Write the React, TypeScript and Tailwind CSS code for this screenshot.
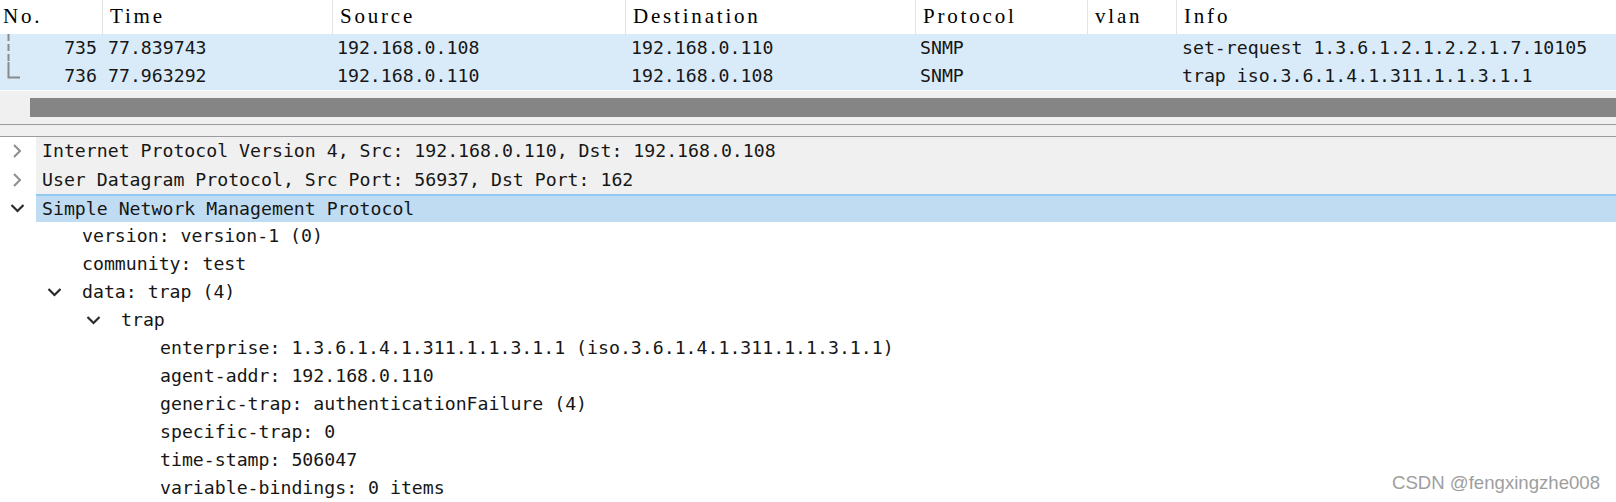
const mono = "font-['DejaVu_Sans_Mono','Liberation_Mono',monospace] text-[18.2px] text-[#161616]"

interface Column {
	title: string
	width: string
}

const columns: Column[] = [
	{ title: 'No.', width: 'w-[102px]' },
	{ title: 'Time', width: 'w-[230px]' },
	{ title: 'Source', width: 'w-[293px]' },
	{ title: 'Destination', width: 'w-[290px]' },
	{ title: 'Protocol', width: 'w-[172px]' },
	{ title: 'vlan', width: 'w-[89px]' },
	{ title: 'Info', width: 'flex-1' }
]

interface Packet {
	no: number
	time: string
	source: string
	destination: string
	protocol: string
	info: string
	last: boolean
}

const packets: Packet[] = [
	{
		no: 735,
		time: '77.839743',
		source: '192.168.0.108',
		destination: '192.168.0.110',
		protocol: 'SNMP',
		info: 'set-request 1.3.6.1.2.1.2.2.1.7.10105',
		last: false
	},
	{
		no: 736,
		time: '77.963292',
		source: '192.168.0.110',
		destination: '192.168.0.108',
		protocol: 'SNMP',
		info: 'trap iso.3.6.1.4.1.311.1.1.3.1.1',
		last: true
	}
]

type Fold = 'open' | 'closed' | 'none'

interface Node {
	text: string
	depth: number
	fold: Fold
	tone?: 'gray' | 'selected'
	height?: string
}

const nodes: Node[] = [
	{
		text: 'Internet Protocol Version 4, Src: 192.168.0.110, Dst: 192.168.0.108',
		depth: 0,
		fold: 'closed',
		tone: 'gray'
	},
	{
		text: 'User Datagram Protocol, Src Port: 56937, Dst Port: 162',
		depth: 0,
		fold: 'closed',
		tone: 'gray',
		height: 'h-[29px]'
	},
	{ text: 'Simple Network Management Protocol', depth: 0, fold: 'open', tone: 'selected' },
	{ text: 'version: version-1 (0)', depth: 1, fold: 'none' },
	{ text: 'community: test', depth: 1, fold: 'none' },
	{ text: 'data: trap (4)', depth: 1, fold: 'open' },
	{ text: 'trap', depth: 2, fold: 'open' },
	{
		text: 'enterprise: 1.3.6.1.4.1.311.1.1.3.1.1 (iso.3.6.1.4.1.311.1.1.3.1.1)',
		depth: 3,
		fold: 'none'
	},
	{ text: 'agent-addr: 192.168.0.110', depth: 3, fold: 'none' },
	{ text: 'generic-trap: authenticationFailure (4)', depth: 3, fold: 'none' },
	{ text: 'specific-trap: 0', depth: 3, fold: 'none' },
	{ text: 'time-stamp: 506047', depth: 3, fold: 'none' },
	{ text: 'variable-bindings: 0 items', depth: 3, fold: 'none' }
]

const indent: Record<number, string> = {
	1: 'pl-0',
	2: 'pl-[39px]',
	3: 'pl-[78px]'
}

const Chevron = ({ fold }: { fold: Fold }) => {
	if (fold === 'closed') {
		return (
			<svg width="10" height="16" viewBox="0 0 10 16" className="shrink-0">
				<path d="M2 2 L8 8 L2 14" fill="none" stroke="#8c8c8c" strokeWidth="2" />
			</svg>
		)
	}
	if (fold === 'open') {
		return (
			<svg width="15" height="10" viewBox="0 0 15 10" className="shrink-0">
				<path d="M1.5 2 L7.5 8 L13.5 2" fill="none" stroke="#2a2a2a" strokeWidth="2.2" />
			</svg>
		)
	}
	return null
}

const TreeLine = ({ last }: { last: boolean }) => (
	<svg width="24" height="28" viewBox="0 0 24 28" className="shrink-0">
		{last ? (
			<path d="M8.5 0 V15.5 H20" fill="none" stroke="#8a8a8a" strokeWidth="2" />
		) : (
			<path d="M8.5 0 V28" fill="none" stroke="#8a8a8a" strokeWidth="2" strokeDasharray="7 3" />
		)}
	</svg>
)

const TreeRow = ({ node }: { node: Node }) => {
	const bg =
		node.tone === 'gray'
			? 'bg-[#f0f0f0]'
			: node.tone === 'selected'
				? 'bg-[#c0dcf3] border-t-2 border-[#92c9f3]'
				: 'bg-white'
	const h = node.height ?? 'h-[28px]'

	if (node.depth === 0) {
		return (
			<div className={`flex ${h}`}>
				<div className="flex w-[36px] shrink-0 items-center justify-center bg-white pr-[2px]">
					<Chevron fold={node.fold} />
				</div>
				<div className={`flex flex-1 items-center pl-[6px] ${bg}`}>
					<span className="whitespace-pre">{node.text}</span>
				</div>
			</div>
		)
	}

	return (
		<div className={`flex ${h} items-center pl-[43px]`}>
			<div className={`flex items-center ${indent[node.depth]}`}>
				<div className="flex w-[39px] items-center pl-[4px]">
					<Chevron fold={node.fold} />
				</div>
				<span className="whitespace-pre">{node.text}</span>
			</div>
		</div>
	)
}

export default function App() {
	return (
		<div className="relative h-[502px] w-[1616px] overflow-hidden bg-white">
			{/* packet list header */}
			<div className="flex h-[34px] bg-white font-['Liberation_Serif',serif] text-[21px] tracking-[2.8px] text-black">
				{columns.map((col, i) => (
					<div
						key={col.title}
						className={`flex items-center ${col.width} ${
							i === 0 ? 'pl-[3px]' : 'border-l border-[#e3e3e3] pl-[7px]'
						}`}
					>
						{col.title}
					</div>
				))}
			</div>

			{/* packet rows */}
			<div className={`bg-[#d9ebf9] ${mono}`}>
				{packets.map((p) => (
					<div key={p.no} className="flex h-[28px] items-center">
						<div className="flex w-[102px] items-center pr-[5px]">
							<TreeLine last={p.last} />
							<span className="flex-1 text-right">{p.no}</span>
						</div>
						<div className="w-[230px] pl-[6px]">{p.time}</div>
						<div className="w-[293px] pl-[5px]">{p.source}</div>
						<div className="w-[290px] pl-[6px]">{p.destination}</div>
						<div className="w-[172px] pl-[5px]">{p.protocol}</div>
						<div className="w-[89px]" />
						<div className="flex-1 pl-[6px] whitespace-pre">{p.info}</div>
					</div>
				))}
			</div>

			{/* horizontal scrollbar + splitter */}
			<div className="h-px bg-white" />
			<div className="bg-[#f0f0f0] pt-[7px] pb-[7px]">
				<div className="ml-[30px] h-[19px] bg-[#858585]" />
			</div>
			<div className="h-px bg-[#9a9aa0]" />
			<div className="h-[11px] bg-[#f0f0f0]" />
			<div className="h-px bg-[#9a9aa0]" />

			{/* packet details tree */}
			<div className={mono}>
				{nodes.map((n, i) => (
					<TreeRow key={i} node={n} />
				))}
			</div>

			<div className="absolute right-[16px] bottom-[5px] font-['Liberation_Sans',Arial,sans-serif] text-[18.6px] text-[#9e9e9e]">
				CSDN @fengxingzhe008
			</div>
		</div>
	)
}
